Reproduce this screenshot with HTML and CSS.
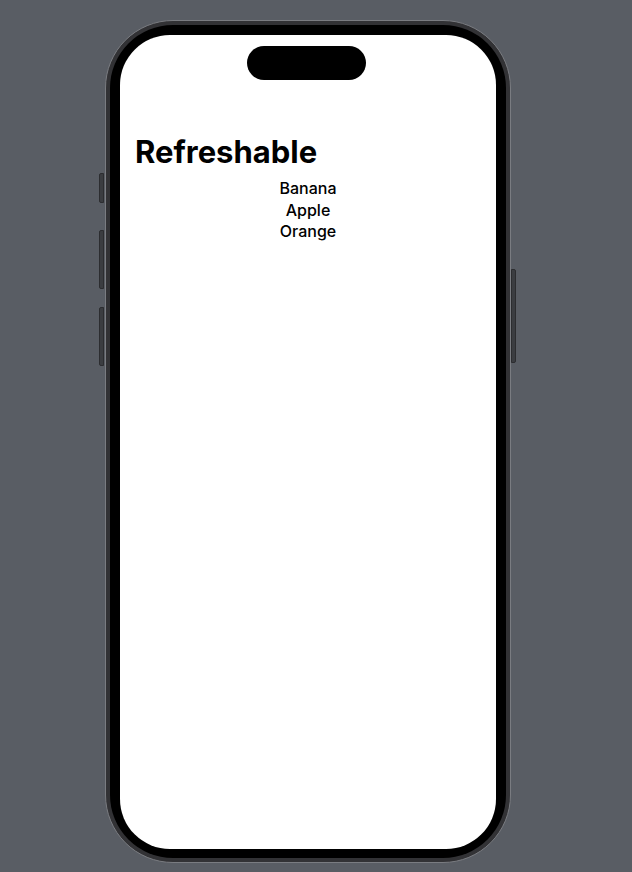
FILE: index.html
```html
<!DOCTYPE html>
<html>
<head>
<meta charset="utf-8">
<link rel="stylesheet" href="styles.css">
</head>
<body>
<div class="phone">
  <span class="btn btn-action"></span>
  <span class="btn btn-vol-up"></span>
  <span class="btn btn-vol-down"></span>
  <span class="btn btn-power"></span>
  <div class="bezel">
    <div class="screen">
      <div class="island"></div>
      <h1 class="title">Refreshable</h1>
      <ul class="list">
        <li>Banana</li>
        <li>Apple</li>
        <li>Orange</li>
      </ul>
    </div>
  </div>
</div>
</body>
</html>
```
FILE: styles.css
```css
html, body {
  margin: 0;
  padding: 0;
  background: #595d64;
}
body {
  width: 632px;
  height: 872px;
  overflow: hidden;
  padding: 20px 0 0 105px;
  box-sizing: border-box;
  font-family: Inter, "Liberation Sans", sans-serif;
}
.phone {
  position: relative;
  width: 406px;
  height: 843px;
  box-sizing: border-box;
  border: 1px solid #7a7c81;
  border-radius: 68px;
  background: #323235;
  padding: 4px;
}
.btn {
  position: absolute;
  width: 5px;
  background: #3b3d41;
  border: 1px solid #2c2d30;
  box-sizing: border-box;
}
.btn-action { left: -7px; top: 152px; height: 30px; border-radius: 2px 0 0 2px; }
.btn-vol-up { left: -7px; top: 209px; height: 59px; border-radius: 2px 0 0 2px; }
.btn-vol-down { left: -7px; top: 286px; height: 59px; border-radius: 2px 0 0 2px; }
.btn-power { right: -6px; top: 248px; height: 94px; border-radius: 0 2px 2px 0; }
.bezel {
  height: 100%;
  box-sizing: border-box;
  background: #000;
  border-radius: 63px;
  padding: 10px 10px 9px 10px;
}
.screen {
  position: relative;
  height: 100%;
  background: #fff;
  border-radius: 50px;
  overflow: hidden;
  padding-top: 98px;
  box-sizing: border-box;
}
.island {
  position: absolute;
  left: 127px;
  top: 11px;
  width: 119px;
  height: 34px;
  border-radius: 17px;
  background: #000;
}
.title {
  margin: 0 0 0 15px;
  font-size: 31px;
  font-weight: 700;
  line-height: 38px;
  color: #000;
  letter-spacing: 0;
}
.list {
  list-style: none;
  margin: 7px 0 0 0;
  padding: 0;
  text-align: center;
  font-size: 16px;
  font-weight: 500;
  line-height: 21.5px;
  color: #000;
}
```
